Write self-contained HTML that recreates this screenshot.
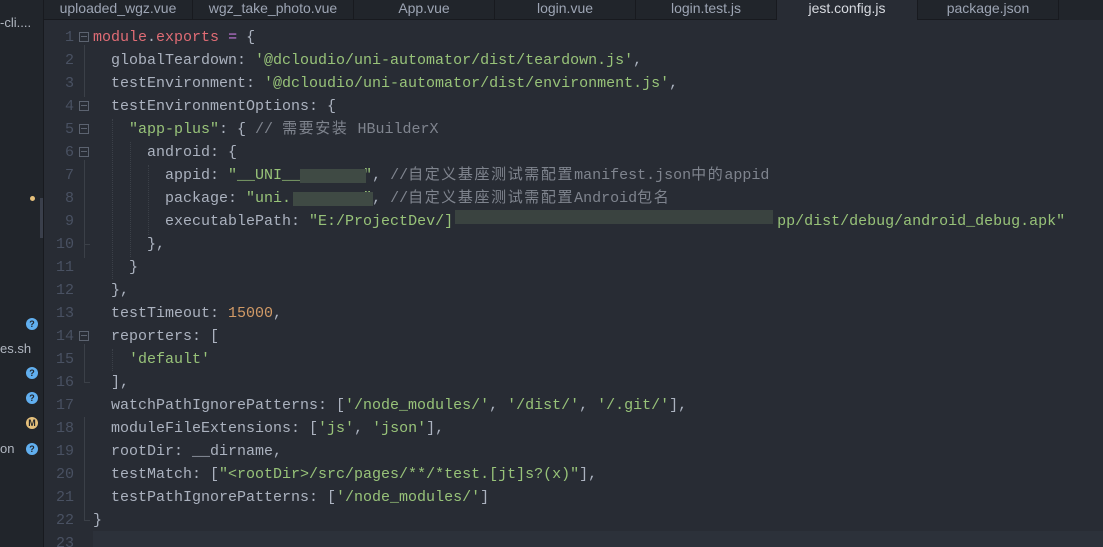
<!DOCTYPE html>
<html style="overflow:hidden"><head><meta charset="utf-8"><style>
html,body{margin:0;overflow:hidden}
body{width:1103px;height:547px;background:#282c34;position:relative;font-family:"Liberation Mono","Noto Sans CJK SC",monospace}
#side{position:absolute;left:0;top:0;width:43px;height:547px;background:#21252b;border-right:1px solid #181a1f;font-family:"Liberation Sans",sans-serif;font-size:13px;color:#b0b6c0}
#tabs{position:absolute;left:44px;top:0;right:0;height:20px;background:#21252b}
.tab{position:absolute;top:0;height:20px;border-right:1px solid #181a1f;border-bottom:1px solid #181a1f;box-sizing:border-box;font:14px "Liberation Sans",sans-serif;color:#9da5b4;text-align:center;line-height:16px;background:#21252b}
.tab.a{background:#282c34;color:#d7dae0;border-bottom:none}
.ln{position:absolute;left:44px;width:30px;text-align:right;font-size:15px;color:#495162;height:23px;line-height:23px}
.cl{position:absolute;left:93px;font-size:15px;color:#abb2bf;white-space:pre;height:23px;line-height:23px}
.s{color:#98c379}.r{color:#e06c75}.n{color:#d19a66}.c{color:#7f848e}.p{color:#c678dd}
.cj{letter-spacing:1.6px}
.fold{position:absolute;left:79px;width:8px;height:8px;border:1px solid #5c6370}
.fold:after{content:"";position:absolute;left:1px;top:3px;width:6px;height:1px;background:#5c6370}
.g{position:absolute;width:0;border-left:1px dotted #3b4048}
.fl{position:absolute;left:84px;width:1px;background:#3b4048}
.blur{position:absolute;height:14px;background:#3f4a44}
.ic{position:absolute;left:26px;width:12px;height:12px;border-radius:50%;background:#61afef;color:#21252b;font-size:9px;text-align:center;line-height:12px;font-weight:bold}
</style></head><body>
<div id="side">
<div style="position:absolute;left:0;top:15px">-cli....</div>
<div style="position:absolute;left:30px;top:196px;width:5px;height:5px;border-radius:50%;background:#e5c07b"></div>
<div style="position:absolute;left:40px;top:198px;width:3px;height:40px;background:#3a3f4b"></div>
<div class="ic" style="top:318px">?</div>
<div style="position:absolute;left:0;top:341px">es.sh</div>
<div class="ic" style="top:367px">?</div>
<div class="ic" style="top:392px">?</div>
<div class="ic" style="top:417px;background:#e5c07b">M</div>
<div style="position:absolute;left:0;top:441px">on</div>
<div class="ic" style="top:443px">?</div>
</div>
<div id="tabs">
<div class="tab" style="left:0;width:149px">uploaded_wgz.vue</div>
<div class="tab" style="left:149px;width:161px">wgz_take_photo.vue</div>
<div class="tab" style="left:310px;width:141px">App.vue</div>
<div class="tab" style="left:451px;width:141px">login.vue</div>
<div class="tab" style="left:592px;width:141px">login.test.js</div>
<div class="tab a" style="left:733px;width:141px">jest.config.js</div>
<div class="tab" style="left:874px;width:141px">package.json</div>
</div>
<div style="position:absolute;left:93px;top:531px;right:0;height:23px;background:#2c313a"></div>
<div class="fl" style="top:45px;height:52px"></div>
<div class="fl" style="top:160px;height:98px"></div>
<div class="fl" style="top:344px;height:38px"></div>
<div class="fl" style="top:417px;height:104px"></div>
<div style="position:absolute;left:84px;top:520px;width:6px;height:1px;background:#3b4048"></div>
<div style="position:absolute;left:84px;top:244px;width:6px;height:1px;background:#3b4048"></div>
<div style="position:absolute;left:84px;top:382px;width:6px;height:1px;background:#3b4048"></div>
<div class="g" style="left:112px;top:119px;height:160px"></div>
<div class="g" style="left:130px;top:142px;height:115px"></div>
<div class="g" style="left:148px;top:165px;height:70px"></div>
<div class="g" style="left:112px;top:349px;height:22px"></div>
<div class="fold" style="top:32px"></div>
<div class="fold" style="top:101px"></div>
<div class="fold" style="top:124px"></div>
<div class="fold" style="top:147px"></div>
<div class="fold" style="top:331px"></div>
<script>
var L=[
'<span class="r">module</span>.<span class="r">exports</span> <span class="p">=</span> {',
'  globalTeardown: <span class="s">\'@dcloudio/uni-automator/dist/teardown.js\'</span>,',
'  testEnvironment: <span class="s">\'@dcloudio/uni-automator/dist/environment.js\'</span>,',
'  testEnvironmentOptions: {',
'    <span class="s">"app-plus"</span>: { <span class="c">// <span class="cj">需要安装</span> HBuilderX</span>',
'      android: {',
'        appid: <span class="s">"__UNI__       "</span>, <span class="c">//<span class="cj">自定义基座测试需配置</span>manifest.json<span class="cj">中的</span>appid</span>',
'        package: <span class="s">"uni.        "</span>, <span class="c">//<span class="cj">自定义基座测试需配置</span>Android<span class="cj">包名</span></span>',
'        executablePath: <span class="s">"E:/ProjectDev/]                                    pp/dist/debug/android_debug.apk"</span>',
'      },',
'    }',
'  },',
'  testTimeout: <span class="n">15000</span>,',
'  reporters: [',
'    <span class="s">\'default\'</span>',
'  ],',
'  watchPathIgnorePatterns: [<span class="s">\'/node_modules/\'</span>, <span class="s">\'/dist/\'</span>, <span class="s">\'/.git/\'</span>],',
'  moduleFileExtensions: [<span class="s">\'js\'</span>, <span class="s">\'json\'</span>],',
'  rootDir: __dirname,',
'  testMatch: [<span class="s">"&lt;rootDir&gt;/src/pages/**/*test.[jt]s?(x)"</span>],',
'  testPathIgnorePatterns: [<span class="s">\'/node_modules/\'</span>]',
'}',''];
var h='';
for(var i=0;i<L.length;i++){var t=26+i*23;
h+='<div class="ln" style="top:'+t+'px">'+(i+1)+'</div><div class="cl" style="top:'+t+'px">'+L[i]+'</div>';}
document.write(h);
</script>
<div class="blur" style="left:300px;top:169px;width:66px"></div>
<div class="blur" style="left:293px;top:192px;width:80px"></div>
<div class="blur" style="left:455px;top:210px;width:318px;background:#3a4340"></div>
</body></html>
